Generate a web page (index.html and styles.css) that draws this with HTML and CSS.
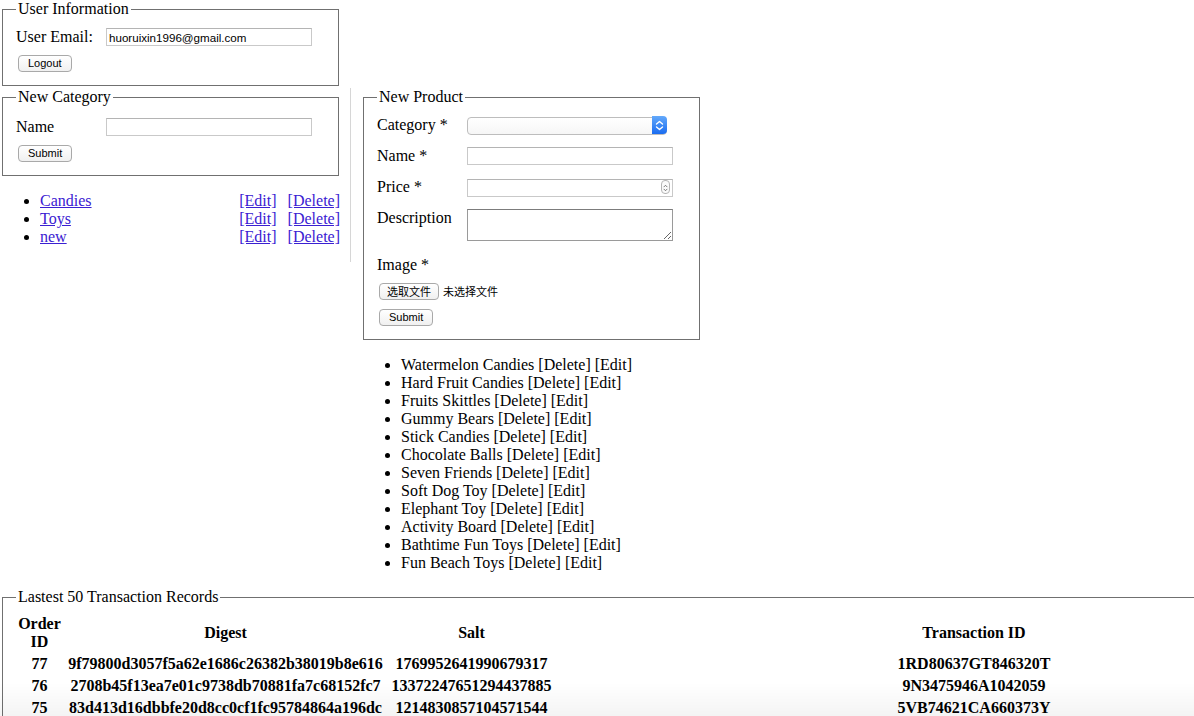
FILE: index.html
```html
<!DOCTYPE html>
<html>
<head>
<meta charset="utf-8">
<title>Admin</title>
<link rel="stylesheet" href="styles.css">
</head>
<body>
<div class="page">
  <fieldset class="fs fs-user">
    <legend>User Information</legend>
    <div class="frow first"><label class="lbl">User Email:</label><input class="txt email" type="text" value="huoruixin1996@gmail.com"></div>
    <div class="brow"><button class="btn">Logout</button></div>
  </fieldset>

  <div class="main">
    <div class="left-col">
      <fieldset class="fs fs-cat">
        <legend>New Category</legend>
        <div class="frow first"><label class="lbl">Name</label><input class="txt" type="text"></div>
        <div class="brow"><button class="btn">Submit</button></div>
      </fieldset>
      <ul class="cat-list">
        <li><div class="cat-row"><a href="#">Candies</a><span class="actions"><a href="#">[Edit]</a><a href="#">[Delete]</a></span></div></li>
        <li><div class="cat-row"><a href="#">Toys</a><span class="actions"><a href="#">[Edit]</a><a href="#">[Delete]</a></span></div></li>
        <li><div class="cat-row"><a href="#">new</a><span class="actions"><a href="#">[Edit]</a><a href="#">[Delete]</a></span></div></li>
      </ul>
    </div>

    <div class="right-col">
      <fieldset class="fs fs-prod">
        <legend>New Product</legend>
        <div class="frow first"><label class="lbl">Category *</label>
          <div class="sel"><select><option></option></select><span class="stepper"><svg width="15" height="17" viewBox="0 0 15 17"><path d="M4.5 7 L7.5 4.5 L10.5 7 M4.5 10 L7.5 12.5 L10.5 10" fill="none" stroke="#fff" stroke-width="1.4" stroke-linecap="round" stroke-linejoin="round"/></svg></span></div>
        </div>
        <div class="frow"><label class="lbl">Name *</label><input class="txt" type="text"></div>
        <div class="frow"><label class="lbl">Price *</label>
          <div class="num"><input class="txt" type="text"><span class="spin"><svg width="9" height="14" viewBox="0 0 9 14"><path d="M2.5 5.5 L4.5 3.5 L6.5 5.5 M2.5 8.5 L4.5 10.5 L6.5 8.5" fill="none" stroke="#555" stroke-width="1" stroke-linecap="round"/></svg></span></div>
        </div>
        <div class="frow"><label class="lbl">Description</label><textarea class="area"></textarea></div>
        <div class="img-label">Image *</div>
        <div class="file-row"><button class="btn cjk">选取文件</button><span class="nofile">未选择文件</span></div>
        <div class="brow2"><button class="btn">Submit</button></div>
      </fieldset>
      <ul class="prod-list">
        <li>Watermelon Candies [Delete] [Edit]</li>
        <li>Hard Fruit Candies [Delete] [Edit]</li>
        <li>Fruits Skittles [Delete] [Edit]</li>
        <li>Gummy Bears [Delete] [Edit]</li>
        <li>Stick Candies [Delete] [Edit]</li>
        <li>Chocolate Balls [Delete] [Edit]</li>
        <li>Seven Friends [Delete] [Edit]</li>
        <li>Soft Dog Toy [Delete] [Edit]</li>
        <li>Elephant Toy [Delete] [Edit]</li>
        <li>Activity Board [Delete] [Edit]</li>
        <li>Bathtime Fun Toys [Delete] [Edit]</li>
        <li>Fun Beach Toys [Delete] [Edit]</li>
      </ul>
    </div>
  </div>

  <fieldset class="fs records">
    <legend>Lastest 50 Transaction Records</legend>
    <table class="tx">
      <colgroup><col class="c-id"><col class="c-digest"><col class="c-salt"><col class="c-txid"></colgroup>
      <thead>
        <tr><th>Order ID</th><th>Digest</th><th>Salt</th><th>Transaction ID</th></tr>
      </thead>
      <tbody>
        <tr><td>77</td><td>9f79800d3057f5a62e1686c26382b38019b8e616</td><td>1769952641990679317</td><td>1RD80637GT846320T</td></tr>
        <tr><td>76</td><td>2708b45f13ea7e01c9738db70881fa7c68152fc7</td><td>13372247651294437885</td><td>9N3475946A1042059</td></tr>
        <tr><td>75</td><td>83d413d16dbbfe20d8cc0cf1fc95784864a196dc</td><td>1214830857104571544</td><td>5VB74621CA660373Y</td></tr>
      </tbody>
    </table>
  </fieldset>
</div>
<div class="fade"></div>
</body>
</html>
```

FILE: styles.css
```css
html {
  overflow: hidden;
  background: #fff;
}
body {
  margin: 0;
  font-family: "Liberation Serif", "Times New Roman", serif;
  font-size: 16px;
  line-height: 18px;
  color: #000;
}
.page {
  width: 1411px;
}
.fs {
  margin: 0 2px;
  padding: 0 12px 13px 13px;
  border: 1px solid #707070;
  min-width: 0;
}
.fs legend {
  padding: 0 2px;
  font-size: 16px;
  line-height: 18px;
}
.fs-user,
.fs-cat,
.fs-prod {
  width: 337px;
  box-sizing: border-box;
}
.frow {
  display: flex;
  align-items: flex-start;
  margin-top: 13px;
}
.frow.first {
  margin-top: 10px;
}
.fs-cat .frow.first {
  margin-top: 12px;
}
.lbl {
  width: 90px;
  flex: none;
  line-height: 18px;
}
.txt {
  width: 206px;
  height: 18px;
  box-sizing: border-box;
  margin: 0;
  padding: 0 2px;
  border: 1px solid #c9c9c9;
  border-top-color: #b4b4b4;
  font-family: "Liberation Sans", Arial, sans-serif;
  font-size: 11px;
  color: #000;
  background: #fff;
  outline: none;
}
.txt.email {
  font-size: 11.6px;
}
.brow {
  margin-top: 9px;
  padding-left: 2px;
  display: flex;
}
.btn {
  height: 17px;
  box-sizing: border-box;
  margin: 0;
  padding: 0 9px;
  border: 1px solid #a9a9a9;
  border-radius: 4px;
  background: linear-gradient(#ffffff, #f0f0f0);
  font-family: "Liberation Sans", Arial, sans-serif;
  font-size: 11px;
  line-height: 15px;
  color: #000;
}
.btn.cjk {
  padding: 0 7px;
  font-family: "Noto Sans CJK SC", "Liberation Sans", sans-serif;
  font-size: 11px;
}

.main {
  display: flex;
  align-items: flex-start;
  margin-top: 2px;
}
.left-col {
  width: 351px;
  box-sizing: border-box;
  padding-right: 10px;
  border-right: 1px solid #d6d6d6;
  display: flex;
  flex-direction: column;
}
.cat-list {
  margin: 16px 0;
  padding-left: 40px;
}
.cat-row {
  display: flex;
  justify-content: space-between;
}
.cat-list a {
  color: #3a20d2;
  text-decoration: underline;
}
.actions {
  display: flex;
  gap: 11px;
  margin-right: 0;
}
.right-col {
  padding-left: 10px;
  display: flex;
  flex-direction: column;
}
.sel {
  position: relative;
  width: 200px;
  height: 18px;
}
.sel select {
  appearance: none;
  -webkit-appearance: none;
  width: 200px;
  height: 18px;
  margin: 0;
  box-sizing: border-box;
  border: 1px solid #bdbdbd;
  border-radius: 4px;
  background: linear-gradient(#ffffff, #f6f6f6);
  font-size: 11px;
}
.stepper {
  position: absolute;
  right: 0;
  top: 0;
  width: 15px;
  height: 18px;
  border-radius: 0 4px 4px 0;
  background: linear-gradient(#63a9fb, #1a6cf0);
  display: flex;
  align-items: center;
  justify-content: center;
}
.num {
  position: relative;
  width: 206px;
  height: 18px;
}
.spin {
  position: absolute;
  right: 3px;
  top: 2px;
  width: 9px;
  height: 14px;
  box-sizing: border-box;
  border: 1px solid #b5b5b5;
  border-radius: 4px;
  background: #fafafa;
  display: flex;
}
.area {
  width: 206px;
  height: 32px;
  box-sizing: border-box;
  margin: 0;
  border: 1px solid #9a9a9a;
  border-top-color: #7c7c7c;
  padding: 1px 2px;
  font-size: 11px;
}
.img-label {
  margin-top: 15px;
  line-height: 18px;
}
.file-row {
  margin-top: 9px;
  padding-left: 2px;
  display: flex;
  align-items: center;
  gap: 4px;
}
.nofile {
  font-family: "Noto Sans CJK SC", "Liberation Sans", sans-serif;
  font-size: 11px;
  line-height: 17px;
}
.brow2 {
  margin-top: 9px;
  padding-left: 2px;
  display: flex;
}
.prod-list {
  margin: 16px 0;
  padding-left: 40px;
}

.records {
  padding-bottom: 12px;
}
.tx {
  table-layout: fixed;
  width: 1379px;
  border-spacing: 2px;
  margin: 6px 0 0 -1px;
}
.c-id { width: 45px; }
.c-digest { width: 323px; }
.c-salt { width: 165px; }
.c-txid { width: 836px; }
.tx th,
.tx td {
  padding: 1px;
  font-weight: bold;
  text-align: center;
  vertical-align: middle;
  line-height: 18px;
}
.tx td {
  white-space: nowrap;
}

.fade {
  position: fixed;
  left: 0;
  right: 0;
  bottom: 0;
  height: 34px;
  background: linear-gradient(rgba(0,0,0,0), rgba(0,0,0,0.045));
  pointer-events: none;
}
```
